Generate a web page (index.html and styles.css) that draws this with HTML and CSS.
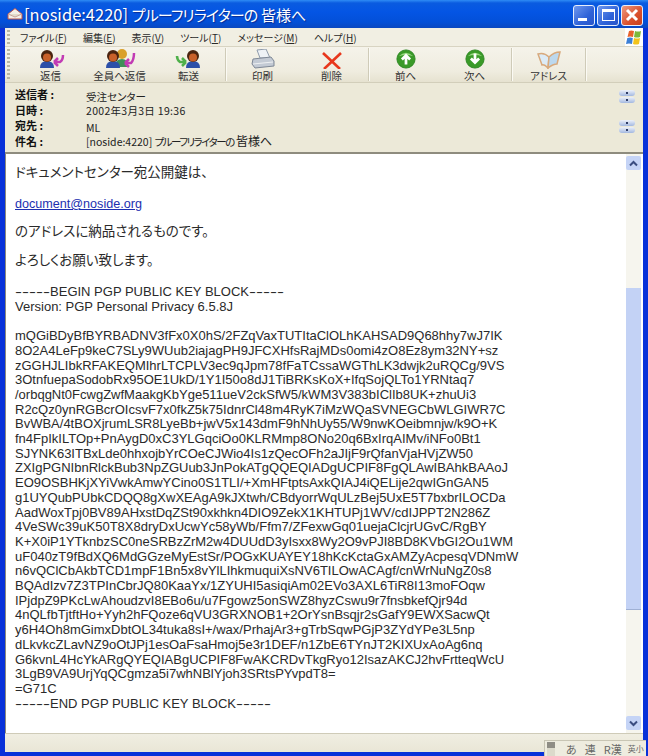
FILE: index.html
```html
<!DOCTYPE html>
<html lang="ja">
<head>
  <meta charset="UTF-8" />
  <title>[noside:4220] プルーフリライターの 皆様へ</title>
  <link rel="stylesheet" href="styles.css">
</head>
<body>
  <div class="window">
    <div class="titlebar">
      <svg class="title-icon" width="16" height="14" viewBox="0 0 16 14">
        <path d="M1 7 L8 1.5 L15 7 V12 H1 Z" fill="#f3efe6" stroke="#b9534a" stroke-width="1"/>
        <path d="M1 7 L8 10 L15 7" fill="#e2dccb" stroke="#c9a39a"/>
      </svg>
      <span class="title-text">[noside:4220] <span class="title-kana">プルーフリライターの</span> <span class="title-kanji">皆様へ</span></span>
      <div class="win-buttons">
        <div class="win-btn"><span class="glyph-min"></span></div>
        <div class="win-btn"><span class="glyph-max"></span></div>
        <div class="win-btn close">
          <svg width="14" height="14" viewBox="0 0 14 14"><path d="M2 2 L12 12 M12 2 L2 12" stroke="#fff" stroke-width="3"/></svg>
        </div>
      </div>
    </div>

    <div class="inner">
      <div class="menubar">
        <span class="grip"></span>
        <span class="menu-item">ファイル(<u>F</u>)</span>
        <span class="menu-item">編集(<u>E</u>)</span>
        <span class="menu-item">表示(<u>V</u>)</span>
        <span class="menu-item">ツール(<u>T</u>)</span>
        <span class="menu-item">メッセージ(<u>M</u>)</span>
        <span class="menu-item">ヘルプ(<u>H</u>)</span>
        <div class="flag">
          <svg width="16" height="15" viewBox="0 0 16 15">
            <path d="M3 1 Q5 0 8 1 L7 7 Q4 6 1.500 7 Z" fill="#e8622a"/>
            <path d="M9 1 Q12 2 15 1 L14 7 Q11 8 8 7 Z" fill="#7cb93a"/>
            <path d="M1.300 8 Q4 7 6.800 8 L6 14 Q3 13 0 14 Z" fill="#3b7fd6"/>
            <path d="M8 8 Q11 9 14 8 L13 14 Q10 15 7 14 Z" fill="#f2c31c"/>
          </svg>
        </div>
      </div>

      <div class="toolbar">
        <span class="grip"></span>
        <div class="tool">
          <svg width="32" height="20" viewBox="0 0 32 20">
            <path d="M5 19 Q5 12 12 12 Q19 12 19 19 Z" fill="#2c4fa8"/>
            <circle cx="12" cy="7" r="6" fill="#4a2410"/><circle cx="12" cy="8.500" r="4" fill="#c8602a"/>
            <path d="M19 13 L25 13 Q28 11 28 6 M19 13 L23 9 M19 13 L23 17" fill="none" stroke="#c23bb4" stroke-width="2.500"/>
          </svg>
          <span>返信</span>
        </div>
        <div class="tool">
          <svg width="36" height="20" viewBox="0 0 36 20">
            <circle cx="20" cy="5" r="5" fill="#d9a02a"/>
            <path d="M13 18 Q13 10 20 10 Q26 10 26 18 Z" fill="#3f8f58"/>
            <path d="M4 19 Q4 12 11 12 Q18 12 18 19 Z" fill="#2c4fa8"/>
            <circle cx="11" cy="7" r="6" fill="#4a2410"/><circle cx="11" cy="8.500" r="4" fill="#c8602a"/>
            <path d="M23 14 L29 14 Q32 11 32 4 M23 14 L27 10 M23 14 L27 18" fill="none" stroke="#c23bb4" stroke-width="2.500"/>
          </svg>
          <span>全員へ返信</span>
        </div>
        <div class="tool">
          <svg width="32" height="20" viewBox="0 0 32 20">
            <path d="M13 19 Q13 12 20 12 Q27 12 27 19 Z" fill="#2c4fa8"/>
            <circle cx="20" cy="7" r="6" fill="#4a2410"/><circle cx="20" cy="8.500" r="4" fill="#c8602a"/>
            <path d="M13 13 L7 13 Q4 11 4 7 M13 13 L9 9 M13 13 L9 17" fill="none" stroke="#4fb04a" stroke-width="2.500"/>
          </svg>
          <span>転送</span>
        </div>
        <span class="sep"></span>
        <div class="tool">
          <svg width="32" height="20" viewBox="0 0 32 20">
            <path d="M10 1 L19 0 L23 9 L13 9 Z" fill="#eef2f6" stroke="#8f9bab"/>
            <path d="M6 10 L24 8 L27 12 V17 L8 19 L5 15 Z" fill="#c3cad4" stroke="#7e8896"/>
            <path d="M6 15 L26 13" stroke="#eef0f2"/>
          </svg>
          <span>印刷</span>
        </div>
        <div class="tool">
          <svg width="32" height="20" viewBox="0 0 32 20">
            <path d="M7 4 L24 20 M25 4 L8 20" stroke="#e8371c" stroke-width="2.600"/>
          </svg>
          <span>削除</span>
        </div>
        <span class="sep"></span>
        <div class="tool">
          <svg width="32" height="20" viewBox="0 0 22 22">
            <circle cx="11" cy="11" r="10" fill="#3a9a28" stroke="#2a8420"/>
            <path d="M3 8 Q11 0 19 8 Q11 5 3 8" fill="#9ad884"/>
            <path d="M11 17 V8 M6.500 11.500 L11 7 L15.500 11.500" fill="none" stroke="#fff" stroke-width="3"/>
          </svg>
          <span>前へ</span>
        </div>
        <div class="tool">
          <svg width="32" height="20" viewBox="0 0 22 22">
            <circle cx="11" cy="11" r="10" fill="#3a9a28" stroke="#2a8420"/>
            <path d="M3 8 Q11 0 19 8 Q11 5 3 8" fill="#9ad884"/>
            <path d="M11 5 V14 M6.500 10.500 L11 15 L15.500 10.500" fill="none" stroke="#fff" stroke-width="3"/>
          </svg>
          <span>次へ</span>
        </div>
        <span class="sep"></span>
        <div class="tool">
          <svg width="32" height="20" viewBox="0 0 32 20">
            <path d="M5 5 Q11 3 16 8 L15 19 Q11 15 9 16 Z" fill="#dcebf6" stroke="#d8a97c" stroke-width="1.500"/>
            <path d="M27 3 Q21 3 16 8 L15 19 Q20 15 24 15 Z" fill="#bcd8ee" stroke="#d8a97c" stroke-width="1.500"/>
          </svg>
          <span>アドレス</span>
        </div>
        <span class="sep"></span>
      </div>

      <div class="msg-head">
        <div class="fields">
          <div class="field"><b>送信者 :</b><span class="low">受注センター</span></div>
          <div class="field"><b>日時 :</b><span class="date">2002年3月3日 19:36</span></div>
          <div class="field"><b>宛先 :</b><span class="low">ML</span></div>
          <div class="field"><b>件名 :</b><span>[noside:4220] <span class="sub-kana">プルーフリライターの</span> <span class="sub-kanji">皆様へ</span></span></div>
        </div>
        <div class="expanders">
          <div class="pair"><i></i><i></i></div>
          <div class="pair"><i></i><i></i></div>
        </div>
      </div>

      <div class="msg-area">
        <div class="msg-body">
          <p class="jp intro">ドキュメントセンター宛公開鍵は、</p>
          <p class="link-row"><a href="#">document@noside.org</a></p>
          <p class="jp">のアドレスに納品されるものです。</p>
          <p class="jp">よろしくお願い致します。</p>
<pre class="key"><span class="dashes">-----</span>BEGIN PGP PUBLIC KEY BLOCK<span class="dashes">-----</span>
Version: PGP Personal Privacy 6.5.8J

mQGiBDyBfBYRBADNV3fFx0X0hS/2FZqVaxTUTItaClOLhKAHSAD9Q68hhy7wJ7IK
8O2A4LeFp9keC7SLy9WUub2iajagPH9JFCXHfsRajMDs0omi4zO8Ez8ym32NY+sz
zGGHJLIbkRFAKEQMIhrLTCPLV3ec9qJpm78fFaTCssaWGThLK3dwjk2uRQCg/9VS
3OtnfuepaSodobRx95OE1UkD/1Y1I50o8dJ1TiBRKsKoX+IfqSojQLTo1YRNtaq7
/orbqgNt0FcwgZwfMaakgKbYge511ueV2ckSfW5/kWM3V383bIClIb8UK+zhuUi3
R2cQz0ynRGBcrOIcsvF7x0fkZ5k75IdnrCl48m4RyK7iMzWQaSVNEGCbWLGIWR7C
BvWBA/4tBOXjrumLSR8LyeBb+jwV5x143dmF9hNhUy55/W9nwKOeibmnjw/k9O+K
fn4FpIkILTOp+PnAygD0xC3YLGqciOo0KLRMmp8ONo20q6BxIrqAIMv/iNFo0Bt1
SJYNK63ITBxLde0hhxojbYrCOeCJWio4Is1zQecOFh2aJIjF9rQfanVjaHVjZW50
ZXIgPGNIbnRlckBub3NpZGUub3JnPokATgQQEQIADgUCPIF8FgQLAwIBAhkBAAoJ
EO9OSBHKjXYiVwkAmwYCino0S1TLI/+XmHFtptsAxkQIAJ4iQELije2qwIGnGAN5
g1UYQubPUbkCDQQ8gXwXEAgA9kJXtwh/CBdyorrWqULzBej5UxE5T7bxbrILOCDa
AadWoxTpj0BV89AHxstDqZSt90xkhkn4DIO9ZekX1KHTUPj1WV/cdIJPPT2N286Z
4VeSWc39uK50T8X8dryDxUcwYc58yWb/Ffm7/ZFexwGq01uejaClcjrUGvC/RgBY
K+X0iP1YTknbzSC0neSRBzZrM2w4DUUdD3yIsxx8Wy2O9vPJI8BD8KVbGI2Ou1WM
uF040zT9fBdXQ6MdGGzeMyEstSr/POGxKUAYEY18hKcKctaGxAMZyAcpesqVDNmW
n6vQClCbAkbTCD1mpF1Bn5x8vYlLIhkmuquiXsNV6TILOwACAgf/cnWrNuNgZ0s8
BQAdIzv7Z3TPInCbrJQ80KaaYx/1ZYUHI5asiqiAm02EVo3AXL6TiR8I13moFOqw
IPjdpZ9PKcLwAhoudzvI8EBo6u/u7Fgowz5onSWZ8hyzCswu9r7fnsbkefQjr94d
4nQLfbTjtftHo+Yyh2hFQoze6qVU3GRXNOB1+2OrYsnBsqjr2sGafY9EWXSacwQt
y6H4Oh8mGimxDbtOL34tuka8sI+/wax/PrhajAr3+gTrbSqwPGjP3ZYdYPe3L5np
dLkvkcZLavNZ9oOtJPj1esOaFsaHmoj5e3r1DEF/n1ZbE6TYnJT2KIXUxAoAg6nq
G6kvnL4HcYkARgQYEQIABgUCPIF8FwAKCRDvTkgRyo12IsazAKCJ2hvFrtteqWcU
3LgB9VA9UrjYqQCgmza5i7whNBlYjoh3SRtsPYvpdT8=
=G71C
<span class="dashes">-----</span>END PGP PUBLIC KEY BLOCK<span class="dashes">-----</span></pre>
        </div>
        <div class="scrollbar">
          <div class="sb-btn">
            <svg width="9" height="7" viewBox="0 0 9 7"><path d="M1 5.500 L4.500 2 L8 5.500" fill="none" stroke="#3a4d80" stroke-width="2"/></svg>
          </div>
          <div class="sb-gap"></div>
          <div class="sb-thumb"></div>
          <div class="sb-rest"></div>
          <div class="sb-btn">
            <svg width="9" height="7" viewBox="0 0 9 7"><path d="M1 1.500 L4.500 5 L8 1.500" fill="none" stroke="#3a4d80" stroke-width="2"/></svg>
          </div>
        </div>
      </div>

      <div class="statusbar"></div>
    </div>

    <!-- IME bar sits over the window corner -->
    <div class="ime">
      <span class="ime-grip"></span>
      <span>あ</span><span>連</span><span>R漢</span><span class="ime-small">英小</span>
    </div>
  </div>
</body>
</html>
```

FILE: styles.css
```css
* {
  box-sizing: border-box;
}
html, body {
  margin: 0;
  padding: 0;
}
body {
  font-family: "Noto Sans CJK JP", "Liberation Sans", sans-serif;
  font-feature-settings: "palt";
  color: #222;
  background: #0a3cc8;
}
.window {
  position: relative;
  width: 648px;
  height: 756px;
  display: flex;
  flex-direction: column;
  background: #0831d9;
  overflow: hidden;
}

/* title bar */
.titlebar {
  height: 28px;
  flex: none;
  display: flex;
  align-items: center;
  padding: 0 5px 0 7px;
  background: linear-gradient(#2f8cf5 0, #0a5be0 3px, #0455e4 12px, #0350d8 22px, #0a48c0 28px);
}
.title-icon {
  flex: none;
}
.title-text {
  margin-left: 1px;
  font-size: 16.500px;
  line-height: 28px;
  color: #fff;
  white-space: nowrap;
  text-shadow: 1px 1px 1px #0a2c90;
}
.title-kana {
  font-size: 15px;
  letter-spacing: -0.900px;
}
.title-kanji {
  font-size: 15px;
}
.win-buttons {
  margin-left: auto;
  display: flex;
  gap: 2px;
  padding-top: 2px;
}
.win-btn {
  width: 22px;
  height: 21px;
  border: 1px solid #e6eefc;
  border-radius: 3px;
  background: linear-gradient(135deg, #6f98ee, #2e62d8 60%, #2a55c8);
  display: flex;
  align-items: center;
  justify-content: center;
}
.win-btn.close {
  background: linear-gradient(135deg, #ee9a80, #d9502c 60%, #c8401e);
}
.glyph-min {
  width: 9px;
  height: 3px;
  margin-top: 9px;
  margin-right: 3px;
  background: #fff;
}
.glyph-max {
  width: 13px;
  height: 12px;
  border: 1px solid #fff;
  border-top-width: 3px;
}

.inner {
  flex: 1;
  min-height: 0;
  display: flex;
  flex-direction: column;
  margin: 0 5px 4px;
  background: #ece9d8;
}

/* menu */
.menubar {
  height: 19px;
  flex: none;
  display: flex;
  align-items: center;
  gap: 16px;
  padding-left: 2px;
  font-size: 10px;
  background: #f1efe3;
  border-bottom: 1px solid #d8d4c2;
}
.menubar .grip {
  margin-right: -6px;
}
.menu-item {
  white-space: nowrap;
  color: #2a2a2a;
}
.flag {
  margin-left: auto;
  width: 18px;
  height: 18px;
  display: flex;
  align-items: center;
  justify-content: center;
  background: #fff;
}
.grip {
  width: 3px;
  align-self: stretch;
  margin: 2px 0;
  background: repeating-linear-gradient(#b8b5a4 0 2px, transparent 2px 4px);
}

/* toolbar */
.toolbar {
  height: 36px;
  flex: none;
  display: flex;
  align-items: stretch;
  padding-left: 2px;
  background: linear-gradient(#f5f3ea, #efecdf 70%, #e6e2d0);
  border-bottom: 1px solid #d2ceba;
}
.toolbar .grip {
  margin-right: 6px;
}
.tool {
  width: 69px;
  flex: none;
  display: flex;
  flex-direction: column;
  align-items: center;
  font-size: 10.500px;
  line-height: 13px;
  padding-top: 2px;
  color: #333;
  white-space: nowrap;
}
.tool svg {
  flex: none;
}
.sep {
  width: 1px;
  margin: 1px 2px;
  flex: none;
  background: #cfcbb8;
  box-shadow: 1px 0 0 #fbfaf4;
}

/* message header */
.msg-head {
  height: 71px;
  flex: none;
  display: flex;
  justify-content: space-between;
  padding: 4px 8px 0 10px;
  background: #ece9d8;
  border-bottom: 2px solid #8e8c7e;
}
.fields {
  display: flex;
  flex-direction: column;
}
.field {
  height: 15.500px;
  display: flex;
  align-items: center;
  font-size: 10.500px;
  line-height: 15px;
  white-space: nowrap;
}
.field b {
  width: 71px;
  flex: none;
  font-size: 11px;
  color: #111;
}
.field .low {
  position: relative;
  top: 2px;
}
.date {
  letter-spacing: 0.300px;
}
.sub-kana {
  letter-spacing: -1.500px;
}
.sub-kanji {
  font-size: 12px;
}
.expanders {
  display: flex;
  flex-direction: column;
  gap: 17px;
  padding-top: 3px;
}
.pair {
  display: flex;
  flex-direction: column;
  gap: 1px;
}
.pair i {
  width: 16px;
  height: 6px;
  border-radius: 3px;
  background: radial-gradient(circle at 50% 50%, #2f3d66 0 1px, transparent 1.500px), linear-gradient(#eef2fa, #a3b8e0);
}

/* message body */
.msg-area {
  flex: 1;
  min-height: 0;
  display: flex;
  background: #fff;
  border-left: 1px solid #8c8a7c;
  padding-right: 2px;
}
.msg-body {
  flex: 1;
  min-width: 0;
  padding: 8px 0 0 9px;
  overflow: hidden;
  color: #2a2a2a;
}
.msg-body p {
  margin: 0;
}
.msg-body .jp {
  font-size: 13.500px;
  line-height: 19px;
  margin-bottom: 10px;
}
.msg-body .intro {
  margin-bottom: 14px;
}
.msg-body .link-row {
  font-family: "Liberation Sans", sans-serif;
  font-size: 12.600px;
  line-height: 18px;
  margin-bottom: 8px;
}
.link-row a {
  color: #1c2fb0;
}
.key {
  margin: 0;
  padding-top: 6px;
  font-family: "Liberation Sans", sans-serif;
  font-size: 13px;
  line-height: 14.700px;
  white-space: pre;
}
/* the dashes run wider than the font draws them */
.dashes {
  display: inline-block;
  transform: scaleX(1.620);
  transform-origin: left center;
  margin-right: 13.400px;
}

/* scrollbar */
.scrollbar {
  width: 15px;
  flex: none;
  display: flex;
  flex-direction: column;
  background: #f6f5ee;
  padding-top: 2px;
  padding-bottom: 3px;
}
.sb-btn {
  height: 14px;
  flex: none;
  background: #c5d4f6;
  border-radius: 2px;
  display: flex;
  align-items: center;
  justify-content: center;
}
.sb-gap {
  height: 118px;
  flex: none;
}
.sb-thumb {
  height: 322px;
  flex: none;
  background: #c3d2f5;
  border-bottom: 1px solid #9fb0d4;
}
.sb-rest {
  flex: 1;
}

.statusbar {
  height: 19px;
  flex: none;
  background: linear-gradient(#f0eee2, #e9e6d6);
  border-top: 1px solid #cfcbb8;
}

/* IME bar */
.ime {
  position: absolute;
  left: 544px;
  top: 740px;
  width: 102px;
  height: 16px;
  display: flex;
  align-items: center;
  gap: 8px;
  padding-left: 2px;
  font-size: 11px;
  line-height: 14px;
  color: #666;
  background: #eeecdf;
  border-top: 1px solid #c8c5b4;
  border-left: 1px solid #c8c5b4;
  white-space: nowrap;
}
.ime-grip {
  width: 8px;
  height: 14px;
  margin-right: 3px;
  background: linear-gradient(#8f8d85 0 6px, #dcdacb 6px);
}
.ime-small {
  font-size: 8px;
  margin-left: -2px;
}
```
